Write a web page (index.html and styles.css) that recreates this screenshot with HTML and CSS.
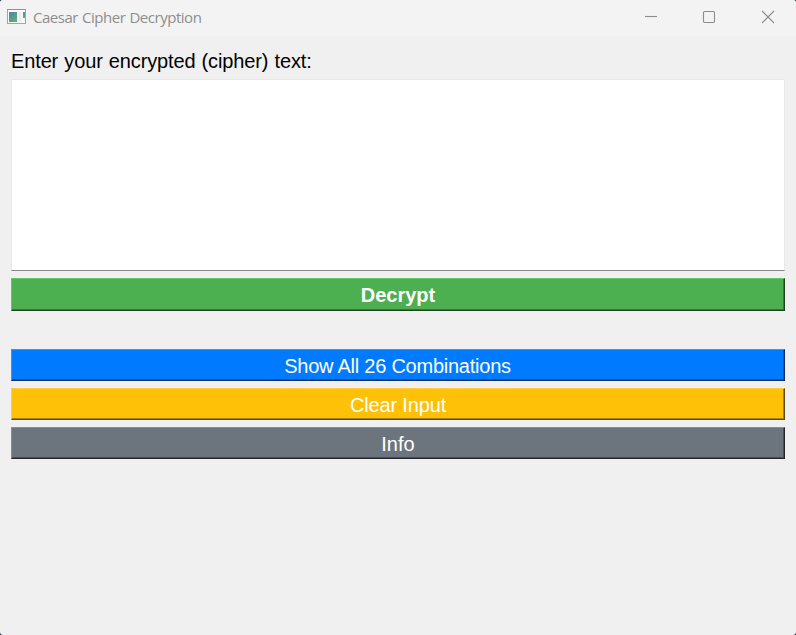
FILE: index.html
```html
<!DOCTYPE html>
<html lang="en">
<head>
<meta charset="utf-8">
<title>Caesar Cipher Decryption</title>
<link rel="stylesheet" href="styles.css">
</head>
<body>
<div class="window">
  <header class="titlebar">
    <svg class="app-icon" width="20" height="16" viewBox="0 0 20 16">
      <defs><linearGradient id="pane" x1="0" y1="0" x2="0.6" y2="1"><stop offset="0" stop-color="#4b84a8"/><stop offset="1" stop-color="#5cad7c"/></linearGradient></defs>
      <rect x="0.5" y="0.5" width="18" height="14" fill="#fafafa" stroke="#a3a5ab"/>
      <path d="M0 .5h19" stroke="#8c929d"/>
      <rect x="2" y="3" width="8" height="10" fill="url(#pane)"/>
      <rect x="11.5" y="3" width="3" height="10" fill="#ececec"/>
      <rect x="16" y="3" width="2" height="6" fill="url(#pane)"/>
    </svg>
    <span class="title">Caesar Cipher Decryption</span>
    <svg class="controls" width="132" height="14" viewBox="0 0 132 14" fill="none" stroke="#8c8c8c" stroke-width="1.1">
      <path d="M1 6.5h12"/>
      <rect x="59.5" y="1.5" width="11" height="11" rx="1.2"/>
      <path d="M118 1l12 12M130 1l-12 12"/>
    </svg>
  </header>
  <main class="content">
    <label class="prompt" for="cipher">Enter your encrypted (cipher) text:</label>
    <textarea class="cipher" id="cipher"></textarea>
    <button class="btn decrypt">Decrypt</button>
    <button class="btn combos">Show All 26 Combinations</button>
    <button class="btn clear">Clear Input</button>
    <button class="btn info">Info</button>
  </main>
</div>
</body>
</html>
```
FILE: styles.css
```css
* { box-sizing: border-box; }
body { margin: 0; background: #1b2a38; overflow: hidden; }
.window {
  height: 635px;
  background: #f0f0f0;
  border-radius: 3px;
  overflow: hidden;
}
.titlebar {
  display: flex;
  height: 36px;
  padding: 9px 20px 0 7px;
  background: #f3f3f3;
}
.title {
  margin: -2px auto 0 6px;
  font: 15px/20px "Open Sans", "Noto Sans", sans-serif;
  letter-spacing: -0.47px;
  word-spacing: 0.6px;
  color: #8e8e8e;
}
.controls { margin-top: 1px; }
.content {
  display: flex;
  flex-direction: column;
  padding: 10px 11px 0;
  font-family: "Liberation Sans", Arial, sans-serif;
  font-size: 20px;
}
.prompt {
  height: 30px;
  line-height: 30px;
  margin-bottom: 3px;
  letter-spacing: -0.13px;
  word-spacing: 0.7px;
  color: #000;
}
.cipher {
  height: 192px;
  margin-bottom: 7px;
  padding: 4px;
  border: 1px solid #e8e8e8;
  border-bottom-color: #868686;
  background: #fff;
  font: inherit;
  resize: none;
  outline: none;
}
.btn {
  height: 32px;
  margin: 0 0 7px;
  padding: 2px 0 0;
  border: 1px solid;
  border-color: var(--light) var(--dark) var(--dark) var(--light);
  box-shadow: inset -1px -1px var(--mid);
  background: var(--face);
  color: #fff;
  font: 20px/28px "Liberation Sans", Arial, sans-serif;
}
.decrypt { height: 33px; margin-bottom: 38px; padding: 0; font-weight: bold; --face: #4caf50; --light: #5fc863; --mid: #34783a; --dark: #1d431f; }
.combos { padding-right: 1px; letter-spacing: -0.24px; --face: #007bff; --light: #3395ff; --mid: #0058b8; --dark: #002f62; }
.clear { letter-spacing: -0.15px; --face: #ffc107; --light: #ffcd39; --mid: #a97f05; --dark: #624a03; }
.info { --face: #6c757d; --light: #848e97; --mid: #495055; --dark: #24272a; }
```
